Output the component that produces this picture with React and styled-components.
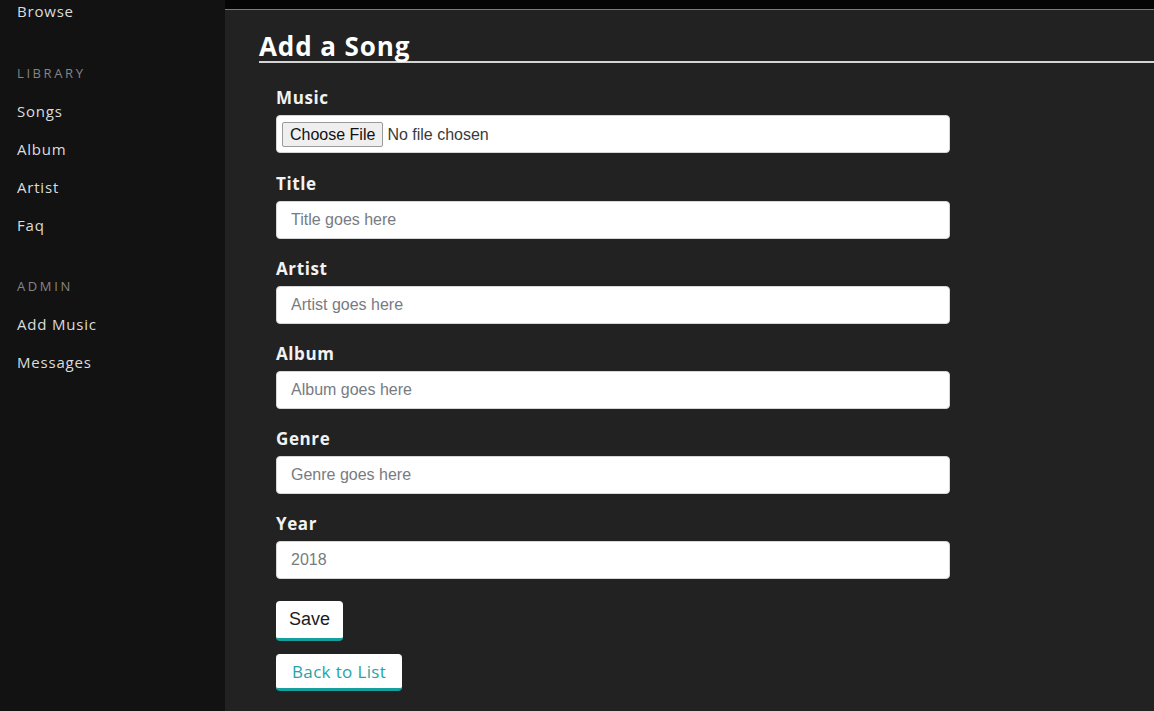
import React from "react";
import styled, { createGlobalStyle } from "styled-components";

const GlobalStyle = createGlobalStyle`
  html, body { margin: 0; padding: 0; height: 100%; background: #222222; }
  body { font-family: "Open Sans", "DejaVu Sans", sans-serif; overflow: hidden; }
  #root { height: 100%; }
  * { box-sizing: border-box; }
`;

const Layout = styled.div`
  display: flex;
  height: 711px;
  overflow: hidden;
`;

const Sidebar = styled.aside`
  flex: 0 0 225px;
  width: 225px;
  background: #121212;
  overflow: hidden;
`;

const Nav = styled.nav`
  display: flex;
  flex-direction: column;
  margin-top: -8px;
  padding-left: 17px;
`;

const NavLink = styled.a`
  display: block;
  height: 38px;
  line-height: 38px;
  font-size: 15px;
  letter-spacing: 0.8px;
  color: #dcdcdc;
  text-decoration: none;
`;

const SectionTitle = styled.div`
  height: 38px;
  line-height: 38px;
  margin-top: ${(p) => p.$gap}px;
  font-size: 13px;
  letter-spacing: 2.6px;
  color: #858585;
  text-transform: uppercase;
`;

const Main = styled.main`
  flex: 1;
  display: flex;
  flex-direction: column;
  background: #222222;
  min-width: 0;
`;

const TopBar = styled.div`
  flex: 0 0 10px;
  height: 10px;
  background: #050505;
  border-bottom: 1px solid #1fb355;
`;

const Content = styled.div`
  padding: 22px 0 0 34px;
`;

const Heading = styled.h2`
  margin: 0;
  font-size: 26px;
  line-height: 29px;
  font-weight: 700;
  letter-spacing: 0.9px;
  color: #ffffff;
  border-bottom: 2px solid #d4d4d4;
`;

const Form = styled.form`
  width: 674px;
  margin: 24px 0 0 17px;
  display: flex;
  flex-direction: column;
`;

const Group = styled.div`
  display: flex;
  flex-direction: column;
  margin-bottom: ${(p) => p.$gap || 19}px;
`;

const Label = styled.label`
  font-size: 17px;
  line-height: 22px;
  font-weight: 700;
  letter-spacing: 0.6px;
  color: #f2f2f2;
  margin-bottom: 6px;
`;

const TextInput = styled.input`
  height: 38px;
  width: 100%;
  border: 1px solid #d6d6d6;
  border-radius: 4px;
  background: #ffffff;
  padding: 0 14px;
  font-family: "Liberation Sans", Arial, sans-serif;
  font-size: 16px;
  color: #777b82;
  outline: none;
  &::placeholder { color: #777b82; opacity: 1; }
`;

const FileBox = styled.div`
  height: 38px;
  display: flex;
  align-items: flex-start;
  padding: 6px 5px;
  border: 1px solid #d6d6d6;
  border-radius: 4px;
  background: #ffffff;
  font-family: "Liberation Sans", Arial, sans-serif;
  font-size: 16px;
`;

const FileButton = styled.button`
  height: 25px;
  padding: 0 7px;
  line-height: 23px;
  border: 1px solid #9a9a9a;
  border-radius: 2px;
  background: #efefef;
  color: #111;
  font-family: inherit;
  font-size: 16px;
`;

const FileName = styled.span`
  margin-left: 4px;
  line-height: 25px;
  color: #3a3a3a;
`;

const Actions = styled.div`
  display: flex;
  flex-direction: column;
  align-items: flex-start;
  gap: 13px;
  margin-top: 3px;
`;

const SaveButton = styled.button`
  padding: 7px 13px;
  line-height: 23px;
  height: 40px;
  font-family: "Liberation Sans", Arial, sans-serif;
  font-size: 18px;
  color: #1c1c1c;
  background: #ffffff;
  border: none;
  border-bottom: 3px solid #15a09e;
  border-radius: 4px;
`;

const BackLink = styled.a`
  display: inline-block;
  padding: 3px 16px;
  line-height: 27px;
  font-size: 17px;
  letter-spacing: 0.35px;
  color: #27a3a8;
  background: #ffffff;
  text-decoration: none;
  border-top: 1px solid #ffffff;
  border-bottom: 3px solid #15a09e;
  border-radius: 4px;
`;

const fields = [
  { id: "title", label: "Title", placeholder: "Title goes here" },
  { id: "artist", label: "Artist", placeholder: "Artist goes here" },
  { id: "album", label: "Album", placeholder: "Album goes here" },
  { id: "genre", label: "Genre", placeholder: "Genre goes here" },
];

export default function App() {
  return (
    <>
      <GlobalStyle />
      <Layout>
        <Sidebar>
          <Nav>
            <NavLink href="#">Browse</NavLink>
            <SectionTitle $gap={24}>Library</SectionTitle>
            <NavLink href="#">Songs</NavLink>
            <NavLink href="#">Album</NavLink>
            <NavLink href="#">Artist</NavLink>
            <NavLink href="#">Faq</NavLink>
            <SectionTitle $gap={23}>Admin</SectionTitle>
            <NavLink href="#">Add Music</NavLink>
            <NavLink href="#">Messages</NavLink>
          </Nav>
        </Sidebar>
        <Main>
          <TopBar />
          <Content>
            <Heading>Add a Song</Heading>
            <Form onSubmit={(e) => e.preventDefault()}>
              <Group $gap={20}>
                <Label>Music</Label>
                <FileBox>
                  <FileButton type="button">Choose File</FileButton>
                  <FileName>No file chosen</FileName>
                </FileBox>
              </Group>
              {fields.map((f) => (
                <Group key={f.id}>
                  <Label htmlFor={f.id}>{f.label}</Label>
                  <TextInput id={f.id} placeholder={f.placeholder} />
                </Group>
              ))}
              <Group>
                <Label htmlFor="year">Year</Label>
                <TextInput id="year" defaultValue="2018" />
              </Group>
              <Actions>
                <SaveButton type="submit">Save</SaveButton>
                <BackLink href="#">Back to List</BackLink>
              </Actions>
            </Form>
          </Content>
        </Main>
      </Layout>
    </>
  );
}
